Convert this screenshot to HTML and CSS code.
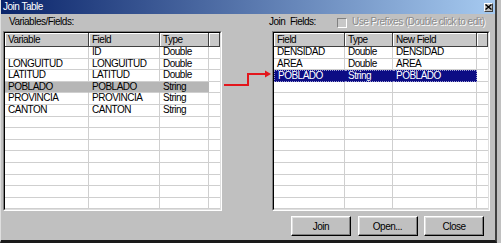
FILE: index.html
```html
<!DOCTYPE html>
<html lang="en">
<head>
  <meta charset="UTF-8" />
  <title>Join Table</title>
  <link rel="stylesheet" href="styles.css">
</head>
<body>
  <div class="window">
    <div class="titlebar">
      <span class="title">Join Table</span>
      <span class="close-box">
        <svg width="7" height="6" viewBox="0 0 7 6"><path d="M0.5 0.5 L6.5 5.5 M6.5 0.5 L0.5 5.5" stroke="#000" stroke-width="1.4"/></svg>
      </span>
    </div>

    <div class="panes">
      <!-- LEFT: variables of the layer -->
      <div class="pane pane-left">
        <div class="pane-label">Variables/Fields:</div>
        <div class="list"><div class="list-inner">
          <div class="row head"><span>Variable</span><span>Field</span><span>Type</span><span></span></div>
          <div class="row"><span></span><span>ID</span><span>Double</span><span></span></div>
          <div class="row"><span>LONGUITUD</span><span>LONGUITUD</span><span>Double</span><span></span></div>
          <div class="row"><span>LATITUD</span><span>LATITUD</span><span>Double</span><span></span></div>
          <div class="row sel-gray"><span>POBLADO</span><span>POBLADO</span><span>String</span><span></span></div>
          <div class="row"><span>PROVINCIA</span><span>PROVINCIA</span><span>String</span><span></span></div>
          <div class="row"><span>CANTON</span><span>CANTON</span><span>String</span><span></span></div>
          <div class="row"><span></span><span></span><span></span><span></span></div>
          <div class="row"><span></span><span></span><span></span><span></span></div>
          <div class="row"><span></span><span></span><span></span><span></span></div>
          <div class="row"><span></span><span></span><span></span><span></span></div>
          <div class="row"><span></span><span></span><span></span><span></span></div>
          <div class="row"><span></span><span></span><span></span><span></span></div>
          <div class="row"><span></span><span></span><span></span><span></span></div>
          <div class="row"><span></span><span></span><span></span><span></span></div>
        </div></div>
      </div>

      <!-- link arrow -->
      <div class="link-col">
        <svg class="link-arrow" width="50" height="20" viewBox="0 0 50 20">
          <path d="M2 15 H26 V4 H44" fill="none" stroke="#e3161c" stroke-width="2"/>
          <path d="M43 0.5 L49 4 L43 7.5 Z" fill="#e3161c"/>
        </svg>
      </div>

      <!-- RIGHT: join fields -->
      <div class="pane pane-right">
        <div class="pane-label label-row">
          <span class="join-label">Join&nbsp; Fields:</span>
          <span class="check"></span>
          <span class="disabled">Use Prefixes (Double click to edit)</span>
        </div>
        <div class="list"><div class="list-inner">
          <div class="row head"><span>Field</span><span>Type</span><span>New Field</span><span></span></div>
          <div class="row"><span>DENSIDAD</span><span>Double</span><span>DENSIDAD</span><span></span></div>
          <div class="row"><span>AREA</span><span>Double</span><span>AREA</span><span></span></div>
          <div class="row sel-blue"><span>POBLADO</span><span>String</span><span>POBLADO</span><span></span></div>
          <div class="row"><span></span><span></span><span></span><span></span></div>
          <div class="row"><span></span><span></span><span></span><span></span></div>
          <div class="row"><span></span><span></span><span></span><span></span></div>
          <div class="row"><span></span><span></span><span></span><span></span></div>
          <div class="row"><span></span><span></span><span></span><span></span></div>
          <div class="row"><span></span><span></span><span></span><span></span></div>
          <div class="row"><span></span><span></span><span></span><span></span></div>
          <div class="row"><span></span><span></span><span></span><span></span></div>
          <div class="row"><span></span><span></span><span></span><span></span></div>
          <div class="row"><span></span><span></span><span></span><span></span></div>
          <div class="row"><span></span><span></span><span></span><span></span></div>
        </div></div>
      </div>
    </div>

    <div class="buttons">
      <button>Join</button>
      <button>Open...</button>
      <button>Close</button>
    </div>
  </div>
</body>
</html>
```

FILE: styles.css
```css
body {
  margin: 0;
  background: #c0c0c0;
  font-family: "Liberation Sans", Arial, sans-serif;
  font-size: 10px;
  letter-spacing: -0.5px;
  color: #000;
}

.window {
  box-sizing: border-box;
  width: 497px;
  height: 243px;
  background: #c0c0c0;
  border-left: 1px solid #dfdfdf;
  border-right: 2px solid #404040;
  border-bottom: 3px solid #1a1a1a;
  display: flex;
  flex-direction: column;
}

.titlebar {
  height: 14px;
  line-height: 14px;
  padding: 0 2px;
  background: linear-gradient(to right, #0a246a, #a6caf0);
  color: #fff;
  display: flex;
  align-items: center;
  justify-content: space-between;
}

.close-box {
  box-sizing: border-box;
  width: 9px;
  height: 9px;
  background: #c0c0c0;
  border: 1px solid;
  border-color: #fff #404040 #404040 #fff;
  display: flex;
  align-items: center;
  justify-content: center;
}

.panes {
  display: flex;
  padding-left: 2px;
}

.pane-left {
  width: 219px;
}

.link-col {
  width: 46px;
}

.link-arrow {
  display: block;
  margin-top: 56px;
  overflow: visible;
}

.pane-right {
  width: 222px;
}

.pane-label {
  height: 17px;
  box-sizing: border-box;
  padding-top: 2px;
  line-height: 12px;
  padding-left: 6px;
}

.label-row {
  display: flex;
  align-items: flex-start;
  padding-left: 1px;
  white-space: nowrap;
}

.join-label {
  width: 68px;
}

.check {
  box-sizing: border-box;
  width: 10px;
  height: 10px;
  margin-top: 2px;
  background: #c8c8c8;
  border: 1px solid;
  border-color: #808080 #fff #fff #808080;
}

.disabled {
  margin-left: 5px;
  color: #8a8a8a;
  text-shadow: 1px 1px 0 #fff;
}

.list {
  border: 1px solid;
  border-color: #808080 #fff #fff #808080;
}

.pane-right .list {
  margin-left: 4px;
  width: 218px;
  box-sizing: border-box;
}

.list-inner {
  border: 1px solid;
  border-color: #000 #dfdfdf #dfdfdf #000;
  background: #fff;
  overflow: hidden;
}

.row {
  display: grid;
  height: 11.6px;
}

.pane-left .row {
  grid-template-columns: 84px 71px 49px 1fr;
}

.pane-right .row {
  grid-template-columns: 71px 48px 84px 1fr;
}

.row span {
  box-sizing: border-box;
  border-right: 1px solid #cfcfcf;
  border-bottom: 1px solid #cfcfcf;
  padding-left: 3px;
  line-height: 10.6px;
  white-space: nowrap;
  overflow: hidden;
}

.row span:last-child {
  border-right: none;
}

.row.head {
  height: 14px;
}

.row.head span {
  background: #c8c8c8;
  border-right: 1px solid #404040;
  border-bottom: 1px solid #404040;
  box-shadow: inset 1px 1px 0 #fff;
  line-height: 13px;
}

.sel-gray span:nth-child(-n+3) {
  background: #b6b6b6;
  border-right-color: #b6b6b6;
}

.sel-blue span:nth-child(-n+3) {
  background: #0c0c84;
  color: #fff;
  border-right-color: #0c0c84;
  border-top: 1px dotted #9a9ad0;
  border-bottom: 1px dotted #9a9ad0;
  line-height: 9.6px;
}

.sel-blue span:first-child {
  border-left: 1px dotted #9a9ad0;
}

.sel-blue span:nth-child(3) {
  border-right: 1px dotted #9a9ad0;
}

.buttons {
  display: flex;
  justify-content: flex-end;
  gap: 6.5px;
  margin-top: 5px;
  padding-right: 11px;
}

button {
  box-sizing: border-box;
  width: 60px;
  height: 20px;
  padding: 0;
  font-family: inherit;
  font-size: 10px;
  letter-spacing: -0.5px;
  color: #000;
  background: #c0c0c0;
  border: 1px solid;
  border-color: #fff #000 #000 #fff;
  box-shadow: inset -1px -1px 0 #808080, inset 1px 1px 0 #dfdfdf;
}
```
